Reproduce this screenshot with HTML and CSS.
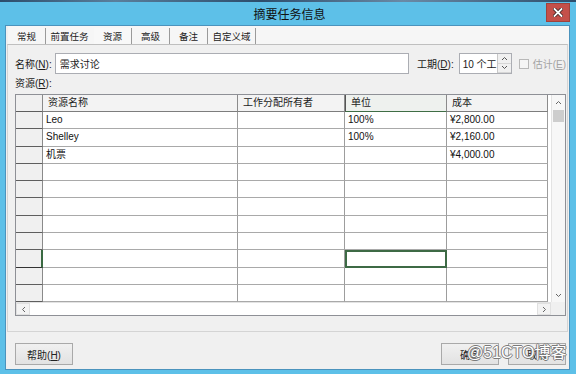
FILE: index.html
```html
<!DOCTYPE html>
<html lang="zh-CN">
  <head>
    <meta charset="UTF-8" />
    <meta name="viewport" content="width=device-width, initial-scale=1.0" />
    <title>摘要任务信息</title>
    <link rel="stylesheet" href="styles.css">
  </head>
  <body>
    <div class="screen">
      <div class="behind"></div>

      <div class="window">
        <!-- Title bar -->
        <div class="titlebar">
          <span class="title">摘要任务信息</span>
          <span class="close">
            <svg width="10" height="9" viewBox="0 0 10 9">
              <path d="M1.5 1 L8.5 8 M8.5 1 L1.5 8" stroke="#3a2020" stroke-width="3.4" stroke-linecap="square" />
              <path d="M1.5 1 L8.5 8 M8.5 1 L1.5 8" stroke="#ffffff" stroke-width="1.8" stroke-linecap="square" />
            </svg>
          </span>
        </div>

        <div class="dialog">
          <!-- Tabs -->
          <div class="tabs">
            <div class="tab w2">常规</div>
            <div class="tab w4 before-active">前置任务</div>
            <div class="tab w2 active">资源</div>
            <div class="tab w2">高级</div>
            <div class="tab w2">备注</div>
            <div class="tab w4">自定义域</div>
          </div>

          <div class="panel">
            <div class="name-row">
              <label class="lbl">名称(<u>N</u>):</label>
              <div class="text-box name-box">需求讨论</div>
              <label class="lbl dur-lbl">工期(<u>D</u>):</label>
              <div class="spin">
                <div class="text-box spin-box">10 个工</div>
                <div class="spin-btns">
                  <span class="spin-btn">
                    <svg width="7" height="5" viewBox="0 0 7 5"><path d="M1 4 L3.5 1.5 L6 4" fill="none" stroke="#555" stroke-width="1" /></svg>
                  </span>
                  <span class="spin-btn">
                    <svg width="7" height="5" viewBox="0 0 7 5"><path d="M1 1 L3.5 3.5 L6 1" fill="none" stroke="#555" stroke-width="1" /></svg>
                  </span>
                </div>
              </div>
              <span class="check"></span>
              <span class="lbl disabled">估计(<u>E</u>)</span>
            </div>

            <div class="lbl res-lbl">资源(<u>R</u>):</div>

            <!-- Resource grid -->
            <div class="grid">
              <div class="sheet">
                <table>
                  <colgroup>
                    <col class="c-rh"><col class="c-name"><col class="c-owner"><col class="c-unit"><col class="c-cost"><col>
                  </colgroup>
                  <thead>
                    <tr>
                      <th class="rh"></th>
                      <th>资源名称</th>
                      <th>工作分配所有者</th>
                      <th class="sel">单位</th>
                      <th>成本</th>
                      <th class="fill"></th>
                    </tr>
                  </thead>
                  <tbody>
                    <tr><td class="rh"></td><td>Leo</td><td></td><td>100%</td><td>¥2,800.00</td><td class="fill"></td></tr>
                    <tr><td class="rh"></td><td>Shelley</td><td></td><td>100%</td><td>¥2,160.00</td><td class="fill"></td></tr>
                    <tr><td class="rh"></td><td>机票</td><td></td><td></td><td>¥4,000.00</td><td class="fill"></td></tr>
                    <tr><td class="rh"></td><td></td><td></td><td></td><td></td><td class="fill"></td></tr>
                    <tr><td class="rh"></td><td></td><td></td><td></td><td></td><td class="fill"></td></tr>
                    <tr><td class="rh"></td><td></td><td></td><td></td><td></td><td class="fill"></td></tr>
                    <tr><td class="rh"></td><td></td><td></td><td></td><td></td><td class="fill"></td></tr>
                    <tr><td class="rh"></td><td></td><td></td><td></td><td></td><td class="fill"></td></tr>
                    <tr><td class="rh cur"></td><td></td><td></td><td class="cell-cur"></td><td></td><td class="fill"></td></tr>
                    <tr><td class="rh"></td><td></td><td></td><td></td><td></td><td class="fill"></td></tr>
                    <tr><td class="rh"></td><td></td><td></td><td></td><td></td><td class="fill"></td></tr>
                  </tbody>
                </table>
              </div>

              <div class="vscroll">
                <span class="arrow">
                  <svg width="7" height="5" viewBox="0 0 7 5"><path d="M1 4 L3.5 1.5 L6 4" fill="none" stroke="#666" stroke-width="1" /></svg>
                </span>
                <span class="thumb"></span>
                <span class="track"></span>
                <span class="arrow">
                  <svg width="7" height="5" viewBox="0 0 7 5"><path d="M1 1 L3.5 3.5 L6 1" fill="none" stroke="#666" stroke-width="1" /></svg>
                </span>
              </div>

              <div class="hscroll">
                <span class="arrow">
                  <svg width="5" height="7" viewBox="0 0 5 7"><path d="M4 1 L1.5 3.5 L4 6" fill="none" stroke="#666" stroke-width="1" /></svg>
                </span>
                <span class="track"></span>
                <span class="arrow">
                  <svg width="5" height="7" viewBox="0 0 5 7"><path d="M1 1 L3.5 3.5 L1 6" fill="none" stroke="#666" stroke-width="1" /></svg>
                </span>
              </div>
              <div class="corner"></div>
            </div>
          </div>

          <!-- Bottom buttons -->
          <div class="buttons">
            <button class="btn">帮助(<u>H</u>)</button>
            <div class="btn-group">
              <button class="btn">确定</button>
              <button class="btn">取消</button>
            </div>
          </div>
        </div>
      </div>

      <div class="watermark">@51CTO博客</div>
    </div>
  </body>
</html>
```

FILE: styles.css
```css
* {
  box-sizing: border-box;
}
body {
  margin: 0;
  font-family: "Liberation Sans", "Noto Sans CJK SC", sans-serif;
  font-size: 10px;
  color: #1a1a1a;
}
u {
  text-decoration: underline;
}
.screen {
  position: relative;
  width: 576px;
  height: 374px;
  overflow: hidden;
  background-color: #5dc0e8;
}
.behind {
  height: 2px;
  background: linear-gradient(90deg, #2c4d6c, #5a7f9c 20%, #2c4d6c 45%, #6a8aa6 70%, #2c4d6c);
}
.window {
  display: flex;
  flex-direction: column;
  height: 372px;
  padding: 0 6px 4px 5px;
  background-color: #5dc0e8;
}
.titlebar {
  position: relative;
  height: 23px;
  display: flex;
  align-items: center;
  justify-content: center;
}
.title {
  font-size: 12px;
  color: #111;
  padding-left: 4px;
}
.close {
  position: absolute;
  right: 0;
  top: 1px;
  width: 24px;
  height: 19px;
  background-color: #c4504a;
  border: 1px solid #a0423c;
  display: flex;
  align-items: center;
  justify-content: center;
}
.dialog {
  flex: 1;
  display: flex;
  flex-direction: column;
  background-color: #f0f0f0;
  border: 1px solid #4b93bd;
}

/* tabs */
.tabs {
  display: flex;
  height: 18px;
  margin-left: 2px;
  background-color: #f6f6f6;
}
.tab {
  display: flex;
  align-items: center;
  justify-content: center;
  height: 16px;
  margin-top: 2px;
  border-right: 1px solid #9a9a9a;
  font-size: 9.5px;
  color: #222;
}
.tab.w2 {
  width: 38px;
}
.tab.w4 {
  width: 48px;
}
.tab.before-active {
  border-right-color: transparent;
}
.tab.active {
  background-color: #f8f8f8;
}
.panel {
  margin-left: 1px;
  margin-right: 1px;
  border: 1px solid #d4d4d4;
  border-top-color: #bfbfbf;
  padding: 8px 1px 15px 7px;
  background-color: #f0f0f0;
}

/* name row */
.name-row {
  display: flex;
  align-items: center;
  height: 21px;
}
.lbl {
  font-size: 10px;
  color: #1a1a1a;
  white-space: nowrap;
}
.lbl.disabled {
  color: #a3a3a3;
  margin-left: 4px;
}
.text-box {
  height: 21px;
  background-color: #fff;
  border: 1px solid #abadb3;
  padding-left: 4px;
  display: flex;
  align-items: center;
  font-size: 10px;
}
.name-box {
  width: 356px;
  margin-left: 3px;
}
.dur-lbl {
  margin-left: 8px;
}
.spin {
  display: flex;
  margin-left: 5px;
  border: 1px solid #abadb3;
  background-color: #fff;
}
.spin-box {
  width: 37px;
  height: 19px;
  border: none;
  padding-left: 3px;
}
.spin-btns {
  display: flex;
  flex-direction: column;
  width: 14px;
  border-left: 1px solid #c8c8c8;
}
.spin-btn {
  flex: 1;
  display: flex;
  align-items: center;
  justify-content: center;
  background-color: #f0f0f0;
  border-bottom: 1px solid #d6d6d6;
}
.check {
  width: 10px;
  height: 10px;
  margin-left: 7px;
  border: 1px solid #b8b8b8;
  background-color: #f5f5f5;
}
.res-lbl {
  height: 14px;
  line-height: 14px;
  margin: 3px 0;
}

/* grid */
.grid {
  display: grid;
  grid-template-columns: 1fr 14px;
  grid-template-rows: 1fr 13px;
  width: 551px;
  height: 222px;
  border: 1px solid #8e9096;
  background-color: #fff;
}
.sheet {
  overflow: hidden;
}
table {
  width: 100%;
  table-layout: fixed;
  border-collapse: separate;
  border-spacing: 0;
}
.c-rh {
  width: 27px;
}
.c-name {
  width: 195px;
}
.c-owner {
  width: 107px;
}
.c-unit {
  width: 102px;
}
.c-cost {
  width: 101px;
}
th,
td {
  padding: 0 0 0 3px;
  font-weight: normal;
  text-align: left;
  white-space: nowrap;
  overflow: hidden;
  font-size: 10px;
  line-height: 14px;
}
thead tr {
  height: 17px;
}
tbody tr {
  height: 17.3px;
}
th {
  background-color: #f3f3f3;
  border-right: 1px solid #8b8b8b;
  border-bottom: 1px solid #7d7d7d;
  padding-left: 5px;
  color: #222;
}
th.sel {
  background-color: #eef1ee;
  border-bottom-color: #3f6d45;
  border-left: 1px solid #555;
}
td {
  border-right: 1px solid #9d9d9d;
  border-bottom: 1px solid #a9a9a9;
  color: #111;
}
.rh {
  background-color: #f0f0f0;
  border-right-color: #8a8a8a;
  border-bottom-color: #5e5e5e;
}
.rh.cur {
  border-right: 2px solid #3a6a42;
  border-bottom-color: #333;
}
th.fill,
td.fill {
  border: none;
  background-color: #fff;
}
td.cell-cur {
  outline: 2px solid #3d6a45;
  outline-offset: -2px;
}

/* scrollbars */
.vscroll {
  display: flex;
  flex-direction: column;
  border-left: 1px solid #e3e3e3;
  background-color: #f7f7f7;
}
.vscroll .arrow {
  height: 14px;
  display: flex;
  align-items: center;
  justify-content: center;
}
.vscroll .thumb {
  height: 12px;
  margin: 1px 1px 0;
  background-color: #cdcdcd;
}
.vscroll .track {
  flex: 1;
}
.hscroll {
  display: flex;
  border-top: 1px solid #e3e3e3;
  background-color: #fff;
}
.hscroll .arrow {
  width: 14px;
  display: flex;
  align-items: center;
  justify-content: center;
  background-color: #f3f3f3;
  border: 1px solid #e0e0e0;
}
.hscroll .track {
  flex: 1;
}
.corner {
  background-color: #f0f0f0;
}

/* buttons */
.buttons {
  display: flex;
  justify-content: space-between;
  margin: 11px 3px 0 9px;
}
.btn-group {
  display: flex;
  gap: 9px;
}
.btn {
  width: 58px;
  height: 22px;
  padding: 0;
  font-family: "Liberation Sans", "Noto Sans CJK SC", sans-serif;
  font-size: 10px;
  color: #222;
  background: linear-gradient(#f0f0f0, #e2e2e2);
  border: 1px solid #a9a9a9;
}
.watermark {
  position: absolute;
  left: 467px;
  top: 343px;
  font-size: 16px;
  line-height: 20px;
  color: #ffffff;
  text-shadow: -1px 0 #7a7a7a, 1px 0 #7a7a7a, 0 -1px #7a7a7a, 0 1px #7a7a7a;
  white-space: nowrap;
}
```
